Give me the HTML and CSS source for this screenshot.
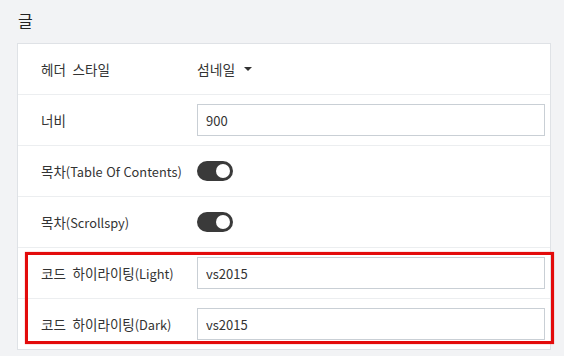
FILE: index.html
```html
<!DOCTYPE html>
<html lang="ko">
<head>
<meta charset="utf-8">
<link rel="stylesheet" href="styles.css">
</head>
<body>
<div class="page">
  <div class="title">글</div>
  <div class="card">
    <div class="row">
      <div class="label">헤더 스타일</div>
      <div class="value"><span class="select">섬네일<span class="caret"></span></span></div>
    </div>
    <div class="row">
      <div class="label">너비</div>
      <div class="value"><input class="input" type="text" value="900"></div>
    </div>
    <div class="row">
      <div class="label">목차<span class="en">(Table Of Contents)</span></div>
      <div class="value"><span class="toggle"><span class="knob"></span></span></div>
    </div>
    <div class="row">
      <div class="label">목차<span class="en">(Scrollspy)</span></div>
      <div class="value"><span class="toggle"><span class="knob"></span></span></div>
    </div>
    <div class="row">
      <div class="label">코드 하이라이팅<span class="en">(Light)</span></div>
      <div class="value"><input class="input" type="text" value="vs2015"></div>
    </div>
    <div class="row">
      <div class="label">코드 하이라이팅<span class="en">(Dark)</span></div>
      <div class="value"><input class="input" type="text" value="vs2015"></div>
    </div>
  </div>
  <div class="highlight"></div>
</div>
</body>
</html>
```

FILE: styles.css
```css
html, body {
  margin: 0;
  padding: 0;
  background: #f2f3f5;
}
body {
  width: 564px;
  height: 356px;
  overflow: hidden;
  font-family: "Noto Sans CJK KR", "Noto Sans", sans-serif;
  color: #333;
}
.page {
  position: relative;
  padding: 9px 13px 0 17px;
}
.title {
  font-size: 16px;
  line-height: 22px;
  color: #222;
  margin: 0 0 12px 1px;
}
.card {
  background: #fff;
  border: 1px solid #dfe2e6;
}
.row {
  display: flex;
  align-items: center;
  height: 50px;
  padding: 0 5px 0 23px;
  border-bottom: 1px solid #eceef0;
}
.row:last-child {
  border-bottom: none;
}
.label {
  width: 156px;
  flex: none;
  font-size: 13.5px;
  word-spacing: 3px;
  color: #333;
  white-space: nowrap;
}
.en {
  font-size: 12.8px;
  word-spacing: 0;
}
.value {
  flex: 1;
  display: flex;
  align-items: center;
}
.select {
  font-size: 13.8px;
  color: #333;
  display: inline-flex;
  align-items: center;
}
.caret {
  display: inline-block;
  margin-left: 9px;
  width: 0;
  height: 0;
  border-left: 4px solid transparent;
  border-right: 4px solid transparent;
  border-top: 4px solid #333;
}
.input {
  box-sizing: border-box;
  width: 100%;
  height: 32px;
  margin: 0;
  padding: 0 8px;
  border: 1px solid #c9cfd5;
  border-radius: 0;
  background: #fff;
  font-family: "Noto Sans CJK KR", "Noto Sans", sans-serif;
  font-size: 13px;
  color: #333;
  outline: none;
}
.toggle {
  position: relative;
  display: inline-block;
  width: 36px;
  height: 20px;
  border-radius: 10px;
  background: #3a3a3a;
}
.knob {
  position: absolute;
  right: 3px;
  top: 3px;
  width: 14px;
  height: 14px;
  border-radius: 50%;
  background: #fff;
}
.highlight {
  position: absolute;
  left: 25px;
  top: 252px;
  width: 529px;
  height: 92px;
  box-sizing: border-box;
  border: 3px solid #e30b0b;
  box-shadow: 0 0 1px rgba(227, 11, 11, 0.6);
  pointer-events: none;
}
```
